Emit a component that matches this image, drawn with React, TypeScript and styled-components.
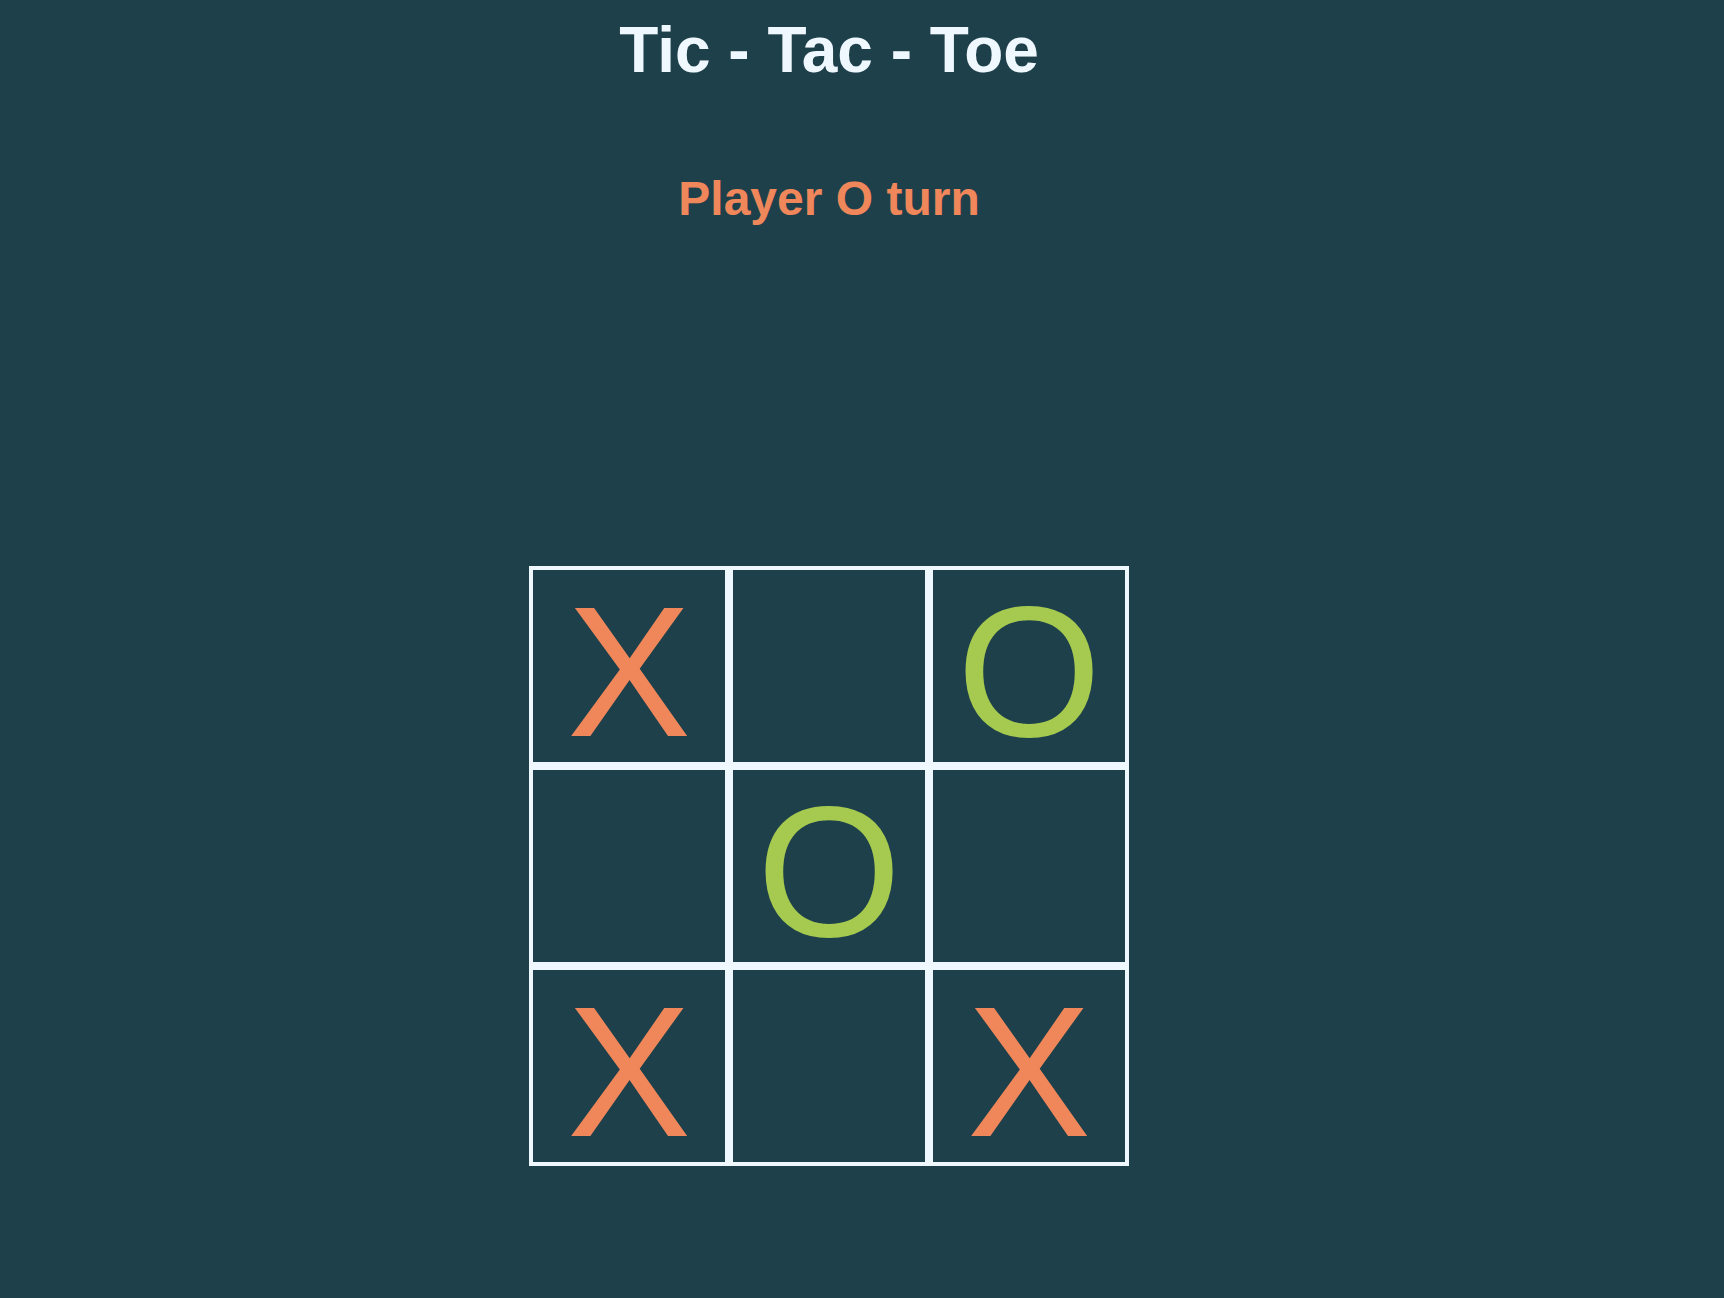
import React from "react";
import styled, { createGlobalStyle } from "styled-components";

const GlobalStyle = createGlobalStyle`
  html, body {
    margin: 0;
    padding: 0;
    background: #1e404b;
    min-height: 100%;
  }
  body {
    font-family: "Liberation Sans", Arial, Helvetica, sans-serif;
    min-height: 1298px;
  }
`;

const Page = styled.div`
  width: 1658px;
  display: flex;
  flex-direction: column;
  align-items: center;
`;

const Title = styled.h1`
  margin: 14px 0 0;
  font-size: 64px;
  line-height: 72px;
  font-weight: 700;
  color: #f0f8ff;
`;

const Status = styled.h2<{ $player: "X" | "O" }>`
  margin: 86px 0 0;
  font-size: 48px;
  line-height: 54px;
  font-weight: 700;
  color: ${(p) => (p.$player === "O" ? "#ef875b" : "#a6ca4f")};
`;

const Board = styled.div`
  margin-top: 340px;
  display: grid;
  grid-template-columns: repeat(3, 200px);
  grid-template-rows: repeat(3, 200px);
`;

const Cell = styled.div`
  box-sizing: border-box;
  border: 4px solid #f0f8ff;
  display: flex;
  align-items: center;
  justify-content: center;
  padding-top: 11px;
`;

const Mark = styled.span<{ $mark: "X" | "O" }>`
  font-family: "Liberation Sans", Arial, Helvetica, sans-serif;
  font-size: 186px;
  line-height: 1;
  font-weight: 400;
  color: ${(p) => (p.$mark === "X" ? "#ef875b" : "#a6ca4f")};
`;

const cells: ("X" | "O" | "")[] = ["X", "", "O", "", "O", "", "X", "", "X"];

export default function App() {
  return (
    <>
      <GlobalStyle />
      <Page>
        <Title>Tic - Tac - Toe</Title>
        <Status $player="O">Player O turn</Status>
        <Board>
          {cells.map((c, i) => (
            <Cell key={i}>{c && <Mark $mark={c}>{c}</Mark>}</Cell>
          ))}
        </Board>
      </Page>
    </>
  );
}
